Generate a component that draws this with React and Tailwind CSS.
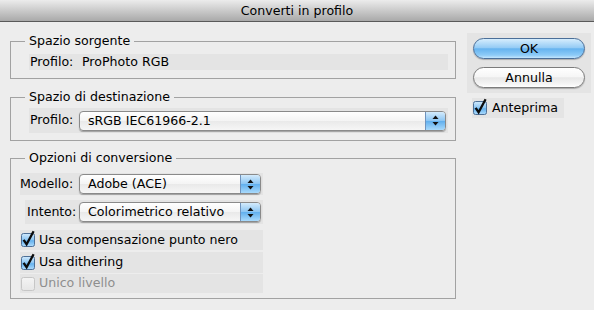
import React from 'react';

const Arrows = () => (
    <svg width="7" height="11" viewBox="0 0 7 11">
        <path d="M3.5 0.5 L6.5 4 L0.5 4 Z" fill="#111" />
        <path d="M3.5 10.5 L6.5 7 L0.5 7 Z" fill="#111" />
    </svg>
);

const Popup = ({ value, className }) => (
    <div
        className={`flex h-[20px] overflow-hidden rounded-[4px] border border-[#8a8a8a] bg-[linear-gradient(#ffffff,#f4f4f4_50%,#e9e9e9_50%,#f6f6f6)] shadow-[0_1px_1px_rgba(0,0,0,0.3)] ${className}`}
    >
        <span className="flex-1 truncate pl-[8px] leading-[18px]">{value}</span>
        <span className="flex w-[20px] items-center justify-center border-l border-[#6f93bd] bg-[linear-gradient(#d4ebfc,#8dc6f3_48%,#62b0ee_52%,#a9dafc)]">
            <Arrows />
        </span>
    </div>
);

const Check = ({ checked, disabled }) => (
    <svg width="14" height="14" viewBox="0 0 14 14" className="shrink-0 overflow-visible">
        <defs>
            <linearGradient id="cbBlue" x1="0" y1="0" x2="0" y2="1">
                <stop offset="0" stopColor="#d2eafc" />
                <stop offset="0.5" stopColor="#8ac5f3" />
                <stop offset="0.55" stopColor="#63b1ee" />
                <stop offset="1" stopColor="#b0dcfc" />
            </linearGradient>
            <linearGradient id="cbGray" x1="0" y1="0" x2="0" y2="1">
                <stop offset="0" stopColor="#f4f4f4" />
                <stop offset="1" stopColor="#e6e6e6" />
            </linearGradient>
        </defs>
        <rect
            x="0.5"
            y="0.5"
            width="13"
            height="13"
            rx="2"
            fill={checked ? 'url(#cbBlue)' : 'url(#cbGray)'}
            stroke={checked ? '#4d6f96' : '#c6c6c6'}
        />
        {checked && (
            <path
                d="M2.6 6.8 L5.6 11.2 L12.6 -1.8"
                fill="none"
                stroke="#0c0c0c"
                strokeWidth="2.3"
                strokeLinejoin="miter"
            />
        )}
        {disabled && null}
    </svg>
);

const Group = ({ legend, className, children }) => (
    <fieldset className={`border border-[#a2a2a2] px-0 ${className}`}>
        <legend className="ml-[14px] px-[4px] leading-[16px]">{legend}</legend>
        {children}
    </fieldset>
);

const App = () => {
    return (
        <div className="flex h-[310px] w-[594px] flex-col overflow-hidden bg-[#ededed] font-['DejaVu_Sans',sans-serif] text-[12.6px] text-black">
            <div className="flex h-[22px] items-center justify-center border-b border-[#5a5a5a] bg-[linear-gradient(#ececec,#a9a9a9)] leading-[21px]">
                Converti in profilo
            </div>

            <div className="flex gap-[11px] pl-[10px]">
                <div className="flex w-[446px] flex-col">
                    <Group legend="Spazio sorgente" className="mt-[11px] pb-[8px]">
                        <div className="mt-[5px] ml-[18px] mr-[7px] flex h-[16px] items-center bg-[#e4e4e4] pl-[1px]">
                            <span className="w-[52px]">Profilo:</span>
                            <span>ProPhoto RGB</span>
                        </div>
                    </Group>

                    <Group legend="Spazio di destinazione" className="mt-[10px] pb-[7px]">
                        <div className="mt-[3px] ml-[18px] mr-[7px] flex h-[25px] items-center bg-[#e4e4e4] pl-[1px]">
                            <span className="w-[49px]">Profilo:</span>
                            <Popup value="sRGB IEC61966-2.1" className="w-[367px]" />
                        </div>
                    </Group>

                    <Group legend="Opzioni di conversione" className="mt-[9px] pb-[5px]">
                        <div className="mt-[7px] ml-[9px] flex h-[22px] w-[243px] items-center bg-[#e4e4e4]">
                            <span className="w-[59px]">Modello:</span>
                            <Popup value="Adobe (ACE)" className="w-[182px]" />
                        </div>
                        <div className="mt-[5px] ml-[14px] flex h-[24px] w-[238px] items-center bg-[#e4e4e4] pl-[2px]">
                            <span className="w-[52px]">Intento:</span>
                            <Popup value="Colorimetrico relativo" className="w-[182px]" />
                        </div>
                        <div className="mt-[6px] ml-[9px] flex h-[20px] w-[243px] items-center gap-[4px] bg-[#e4e4e4] pl-[1px]">
                            <Check checked />
                            <span>Usa compensazione punto nero</span>
                        </div>
                        <div className="mt-[2px] ml-[9px] flex h-[21px] w-[243px] items-center gap-[4px] bg-[#e4e4e4] pl-[1px]">
                            <Check checked />
                            <span>Usa dithering</span>
                        </div>
                        <div className="mt-[1px] ml-[9px] flex h-[19px] w-[243px] items-center gap-[4px] bg-[#e4e4e4] pl-[1px] text-[#8e8e8e]">
                            <Check disabled />
                            <span>Unico livello</span>
                        </div>
                    </Group>
                </div>

                <div className="mt-[11px] flex w-[124px] flex-col">
                    <div className="flex flex-col gap-[8px] bg-[#e4e4e4] px-[6px] py-[5px]">
                        <button className="h-[21px] rounded-full border border-[#4b6f99] bg-[linear-gradient(#d6edfd,#96ccf5_45%,#66b3ef_52%,#8dcbf7_85%,#c4e6fd)] leading-[19px] shadow-[0_1px_1px_rgba(0,0,0,0.25)]">
                            OK
                        </button>
                        <button className="h-[21px] rounded-full border border-[#7c7c7c] bg-[linear-gradient(#ffffff,#f6f6f6_45%,#e8e8e8_52%,#f5f5f5_85%,#ffffff)] leading-[19px] shadow-[0_1px_1px_rgba(0,0,0,0.25)]">
                            Annulla
                        </button>
                    </div>
                    <div className="mt-[5px] ml-[5px] flex h-[20px] items-center gap-[5px] self-start bg-[#e4e4e4] pl-[1px] pr-[6px]">
                        <Check checked />
                        <span>Anteprima</span>
                    </div>
                </div>
            </div>
        </div>
    );
};

export default App;
